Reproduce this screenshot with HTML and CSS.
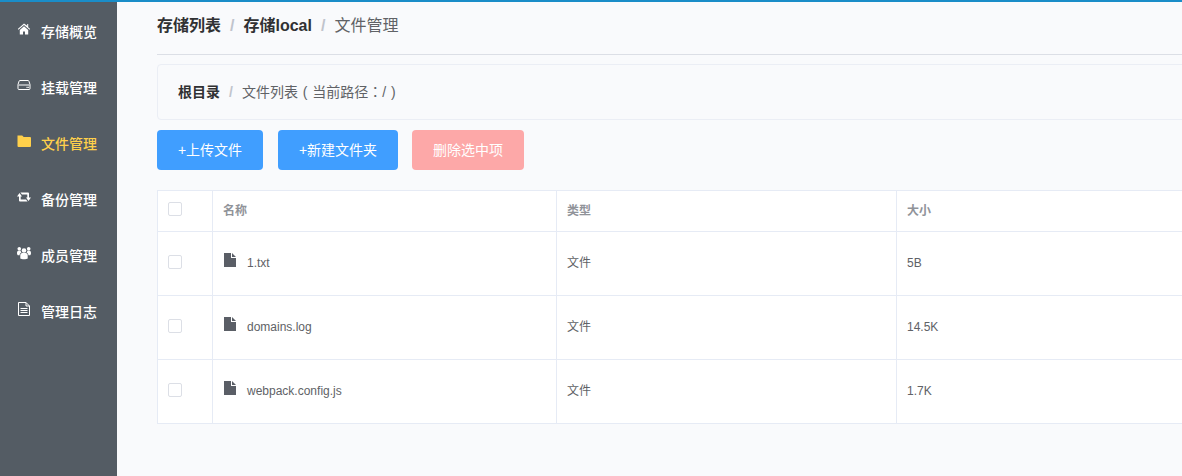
FILE: index.html
```html
<!DOCTYPE html>
<html lang="zh">
<head>
<meta charset="utf-8">
<title>文件管理</title>
<link rel="stylesheet" href="styles.css">
</head>
<body>
<div class="topline"></div>
<div class="app">
  <nav class="sidebar">
    <a class="nav-item"><svg class="nav-icon" viewBox="0 0 14 14"><path d="M7 1.500 .8 7l.7.8L7 3l5.500 4.800.7-.8-2-1.800V2H10.200v1.700zM2.800 8v4.500H6V9.500h2v3h3.200V8L7 4.300z" fill="#fff"/></svg><span>存储概览</span></a>
    <a class="nav-item"><svg class="nav-icon" viewBox="0 0 14 14"><path d="M3 2.500h8a1 1 0 0 1 .9.600L13 6.500v4a1 1 0 0 1-1 1H2a1 1 0 0 1-1-1v-4l1.100-3.400a1 1 0 0 1 .9-.6zM1.500 7h11" fill="none" stroke="#fff"/><rect x="9.500" y="8.800" width="1.200" height="1.200" fill="#fff"/><rect x="11" y="8.800" width="1" height="1" fill="#fff"/></svg><span>挂载管理</span></a>
    <a class="nav-item active"><svg class="nav-icon" viewBox="0 0 14 14"><path d="M.5 1.500h4.700L6.700 3H13a1 1 0 0 1 1 1v8a1 1 0 0 1-1 1H1.500a1 1 0 0 1-1-1z" fill="#ffd04b"/></svg><span>文件管理</span></a>
    <a class="nav-item"><svg class="nav-icon" viewBox="0 0 14 14"><path d="M0 6.500 2.500 3 5 6.500H3.700v3H9l1.600 2H3a1 1 0 0 1-1-1v-4zM14 7.500l-2.500 3.500L9 7.500h1.300v-3H5l-1.600-2H11a1 1 0 0 1 1 1v4z" fill="#fff"/></svg><span>备份管理</span></a>
    <a class="nav-item"><svg class="nav-icon" viewBox="0 0 14 14"><circle cx="7" cy="4.500" r="2.300" fill="#fff"/><circle cx="2.300" cy="2.800" r="1.800" fill="#fff"/><circle cx="11.700" cy="2.800" r="1.800" fill="#fff"/><path d="M3.300 12.500V9.300c0-1.500 1-2.300 2-2.300h3.400c1 0 2 .8 2 2.300v3.200c-1 1-6.400 1-7.400 0zM0 7.300c0-2 .7-2.800 1.800-2.800h1.700c.2.900.6 1.500 1 1.900-1.300.5-1.900 1.500-1.900 2.900H1.300C.6 9.300 0 8.500 0 7.300zM14 7.300c0-2-.7-2.800-1.800-2.800h-1.700c-.2.900-.6 1.500-1 1.900 1.300.5 1.900 1.500 1.900 2.900h1.300c.7 0 1.300-.8 1.300-2z" fill="#fff"/></svg><span>成员管理</span></a>
    <a class="nav-item"><svg class="nav-icon" viewBox="0 0 14 14"><path d="M1.500.5h7.500l3.500 3.500v9.500h-11zM9 .5V4h3.500M3.500 6.500h7M3.500 8.500h7M3.500 10.500h7" fill="none" stroke="#fff"/></svg><span>管理日志</span></a>
  </nav>
  <main class="content">
    <div class="crumbs"><b>存储列表</b><i>/</i><b>存储local</b><i>/</i><span>文件管理</span></div>
    <div class="pathbar"><b>根目录</b><i>/</i><span class="pathtext">文件列表 ( 当前路径<span class="colon" lang="zh-TW">：</span>/ )</span></div>
    <div class="actions">
      <button class="btn btn-upload">+上传文件</button>
      <button class="btn btn-folder">+新建文件夹</button>
      <button class="btn btn-delete">删除选中项</button>
    </div>
    <table class="files">
      <colgroup><col class="c-check"><col class="c-name"><col class="c-type"><col class="c-size"></colgroup>
      <thead>
        <tr><th><span class="check"></span></th><th>名称</th><th>类型</th><th>大小</th></tr>
      </thead>
      <tbody>
        <tr><td><span class="check"></span></td><td><div class="fname"><svg class="ficon" viewBox="0 0 12 14"><path d="M0 0h7v5h5v9H0zM8 0l4 4H8z" fill="#5a5e66"/></svg><span>1.txt</span></div></td><td>文件</td><td>5B</td></tr>
        <tr><td><span class="check"></span></td><td><div class="fname"><svg class="ficon" viewBox="0 0 12 14"><path d="M0 0h7v5h5v9H0zM8 0l4 4H8z" fill="#5a5e66"/></svg><span>domains.log</span></div></td><td>文件</td><td>14.5K</td></tr>
        <tr><td><span class="check"></span></td><td><div class="fname"><svg class="ficon" viewBox="0 0 12 14"><path d="M0 0h7v5h5v9H0zM8 0l4 4H8z" fill="#5a5e66"/></svg><span>webpack.config.js</span></div></td><td>文件</td><td>1.7K</td></tr>
      </tbody>
    </table>
  </main>
</div>
</body>
</html>
```
FILE: styles.css
```css
* { box-sizing: border-box; }
html, body { margin: 0; height: 100%; overflow: hidden; }
body {
  background: #f9fafc;
  font-family: "Liberation Sans", "Noto Sans CJK SC", sans-serif;
  color: #606266;
}
.topline { height: 2px; background: #1a8dc8; }
.app { display: flex; height: 474px; }
.sidebar {
  flex: 0 0 117px;
  background: #545c64;
  padding-top: 2px;
}
.nav-item {
  display: flex;
  align-items: center;
  height: 56px;
  padding-left: 17px;
  padding-bottom: 2px;
  color: #fff;
  font-size: 14px;
  font-weight: 500;
}
.nav-item.active { color: #ffd04b; }
.nav-icon { width: 14px; height: 14px; margin-right: 10px; position: relative; top: -2px; }
.content { flex: 0 0 auto; width: 1200px; padding-left: 40px; }
.crumbs {
  height: 53px;
  line-height: 48px;
  border-bottom: 1px solid #dcdfe6;
  font-size: 16px;
  color: #606266;
}
.crumbs b { color: #303133; }
.crumbs i, .pathbar i { font-style: normal; font-weight: 700; color: #c0c4cc; margin: 0 9px; }
.pathbar {
  margin-top: 9px;
  height: 56px;
  line-height: 52px;
  padding-left: 20px;
  border: 1px solid #ebeef5;
  border-radius: 4px;
  font-size: 14px;
}
.pathbar b { color: #303133; }
.pathtext { word-spacing: 1px; }
.colon { font-family: "Noto Sans CJK TC", sans-serif; }
.actions { display: flex; margin-top: 10px; }
.btn {
  height: 40px;
  border: 0;
  border-radius: 4px;
  color: #fff;
  background: #409eff;
  font: inherit;
  font-size: 14px;
  font-weight: 400;
  padding: 0 0 2px;
}
.btn-upload { width: 106px; margin-right: 15px; }
.btn-folder { width: 120px; margin-right: 14px; }
.btn-delete { width: 112px; background: #fda8a8; }
.files {
  margin-top: 20px;
  border-collapse: collapse;
  table-layout: fixed;
  width: 1125px;
  background: #fff;
  font-size: 12px;
}
.c-check { width: 55px; }
.c-name { width: 344px; }
.c-type { width: 340px; }
.c-size { width: 386px; }
.files th, .files td {
  border: 1px solid #e6ebf5;
  padding: 0 10px 2px;
  text-align: left;
}
.files th { height: 41px; color: #909399; font-weight: 700; padding-bottom: 4px; }
.files td { height: 64px; color: #606266; }
.files td:first-child, .files td:nth-child(3) { padding-bottom: 4px; }
.files th:first-child, .files td:first-child { padding-left: 10px; padding-right: 0; }
.check {
  display: block;
  width: 14px;
  height: 14px;
  background: #fff;
  border: 1px solid #dcdfe6;
  border-radius: 2px;
}
.fname { display: flex; align-items: center; }
.ficon { width: 12px; height: 14px; margin: 0 11px 0 1px; position: relative; top: -3px; }
```
